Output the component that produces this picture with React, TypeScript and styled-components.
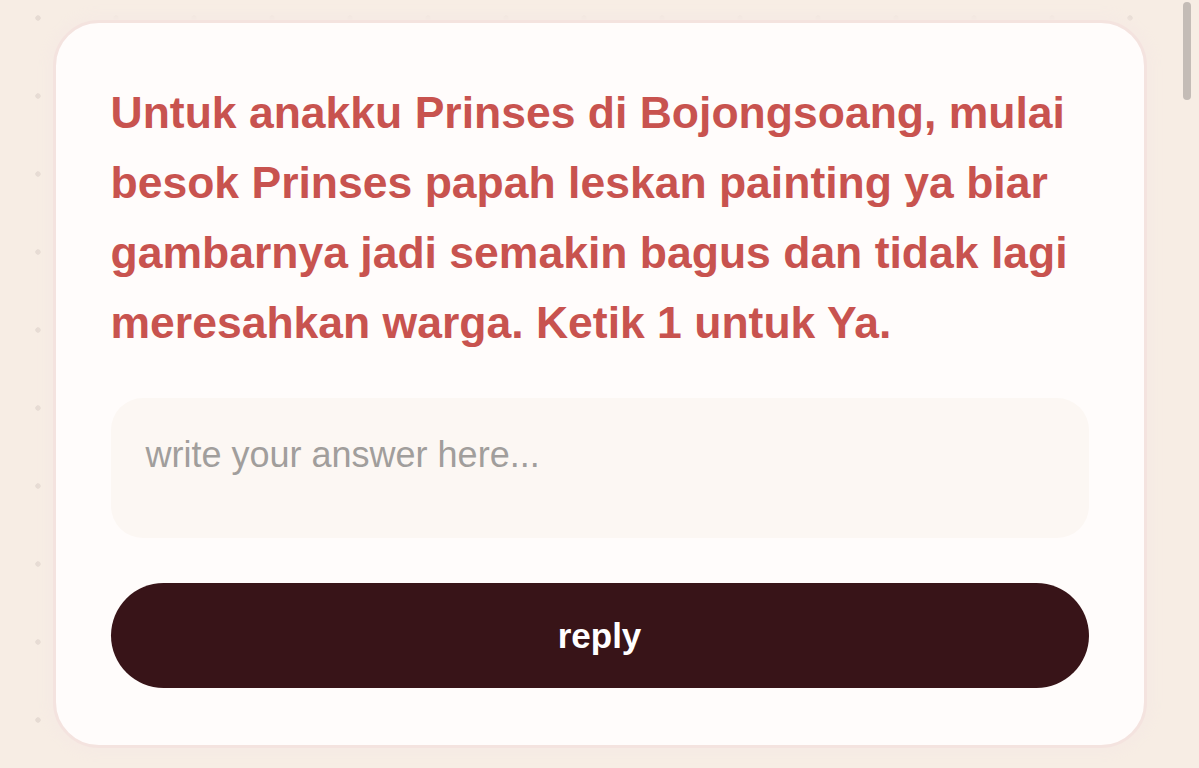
import React, { useState } from 'react';
import styled, { createGlobalStyle } from 'styled-components';

const GlobalStyle = createGlobalStyle`
    html, body {
        margin: 0;
        padding: 0;
    }
    body {
        min-height: 100vh;
        background-color: #f7ede4;
        background-image: radial-gradient(circle, #e6dbd3 2.4px, transparent 3px);
        background-size: 78px 78px;
        background-position: -1px -21px;
        font-family: "Liberation Sans", Arial, Helvetica, sans-serif;
        overflow: hidden;
    }
`

const Page = styled.main`
    display: flex;
    justify-content: center;
    padding: 20px 0 0;
`

const Card = styled.section`
    width: 1094px;
    box-sizing: border-box;
    padding: 55px 55px 57px;
    background: #fffcfb;
    border: 3px solid #f4e3df;
    border-radius: 46px;
    box-shadow: 0 0 10px 8px #f6ebe4;
    display: flex;
    flex-direction: column;
`

const Question = styled.p`
    margin: 0;
    font-size: 44.5px;
    line-height: 70px;
    font-weight: bold;
    color: #c8534f;
`

const Answer = styled.textarea`
    margin-top: 40px;
    height: 140px;
    box-sizing: border-box;
    padding: 36px 35px;
    border: none;
    outline: none;
    resize: none;
    border-radius: 32px;
    background: #fcf7f3;
    font-family: "Liberation Sans", Arial, Helvetica, sans-serif;
    font-size: 36px;
    color: #3a2a28;
    &::placeholder {
        color: #a19e9c;
    }
`

const ReplyButton = styled.button`
    margin-top: 45px;
    height: 105px;
    border: none;
    border-radius: 53px;
    background: #381418;
    color: #ffffff;
    font-family: "Liberation Sans", Arial, Helvetica, sans-serif;
    font-weight: bold;
    font-size: 35px;
    cursor: pointer;
`

const ScrollThumb = styled.div`
    position: fixed;
    top: 2px;
    right: 8px;
    width: 8px;
    height: 98px;
    border-radius: 4px;
    background: #c4bcb6;
`

function App() {
    const [answer, setAnswer] = useState('');
    return (
        <>
            <GlobalStyle/>
            <Page>
                <Card>
                    <Question>
                        Untuk anakku Prinses di Bojongsoang, mulai besok Prinses papah leskan painting ya biar gambarnya jadi semakin bagus dan tidak lagi meresahkan warga. Ketik 1 untuk Ya.
                    </Question>
                    <Answer
                        placeholder="write your answer here..."
                        value={answer}
                        onChange={(e) => setAnswer(e.target.value)}
                    />
                    <ReplyButton>reply</ReplyButton>
                </Card>
            </Page>
            <ScrollThumb/>
        </>
    )
}

export default App;
